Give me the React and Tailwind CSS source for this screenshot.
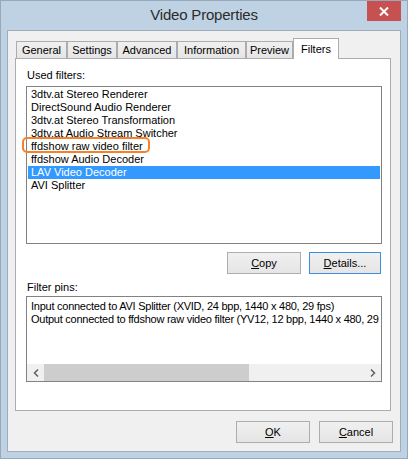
import React from "react";

const font = { fontFamily: '"Liberation Sans", Arial, sans-serif' };

const filters = [
  "3dtv.at Stereo Renderer",
  "DirectSound Audio Renderer",
  "3dtv.at Stereo Transformation",
  "3dtv.at Audio Stream Switcher",
  "ffdshow raw video filter",
  "ffdshow Audio Decoder",
  "LAV Video Decoder",
  "AVI Splitter",
];

const tabs = ["General", "Settings", "Advanced", "Information", "Preview"];
const tabWidths = ["w-[51px]", "w-[50px]", "w-[60px]", "w-[69px]", "w-[47px]"];

const Button = ({ children, className = "" }) => (
  <button
    className={`h-[22px] border bg-gradient-to-b from-[#f0f0f0] to-[#e5e5e5] text-[11px] text-black ${className}`}
  >
    {children}
  </button>
);

const App = () => {
  return (
    <div
      className="w-[408px] h-[459px] flex flex-col bg-[#bfd2e4] border border-[#97aabd] px-[6px] pb-[6px] text-black"
      style={font}
    >
      {/* title bar */}
      <div className="relative h-[29px] flex items-center justify-center">
        <span className="text-[15px] text-[#2b2b2b] tracking-[-0.2px]">Video Properties</span>
        <div className="absolute right-[0px] top-0 w-[34px] h-[20px] bg-[#c75050] flex items-center justify-center">
          <svg width="10" height="9" viewBox="0 0 10 9">
            <path d="M1 0.5 L9 8.5 M9 0.5 L1 8.5" stroke="white" strokeWidth="2" />
          </svg>
        </div>
      </div>

      {/* client */}
      <div className="flex-1 flex flex-col bg-[#f0f0f0] border border-[#a3adb8] pl-[7px] pr-[9px] pt-[7px]">
        {/* tab strip */}
        <div className="flex items-end h-[20px] pl-[1px]">
          {tabs.map((t, i) => (
            <div
              key={t}
              className={`${tabWidths[i]} h-[17px] border border-b-0 border-[#acacac] bg-gradient-to-b from-[#f0f0f0] to-[#e5e5e5] flex items-center justify-center text-[11px]`}
            >
              {t}
            </div>
          ))}
          <div className="w-[46px] h-[21px] -mb-[1px] border border-b-0 border-[#acacac] bg-white relative z-10 flex items-start justify-center pt-[2px] text-[11px]">
            Filters
          </div>
        </div>

        {/* panel */}
        <div className="h-[353px] border border-[#acacac] bg-white pl-[10px] pr-[8px] flex flex-col">
          <div className="h-[27px] flex items-end pb-[3px] pl-[1px] text-[11px]">Used filters:</div>
          <div className="relative h-[158px] border border-[#828282] px-[1px] pt-[1px]">
            {filters.map((f, i) => (
              <div
                key={f}
                className={`h-[13px] leading-[13px] pl-[3px] text-[11px] whitespace-nowrap ${
                  i === 6 ? "bg-[#3399ff] text-white" : ""
                }`}
              >
                {f}
              </div>
            ))}
            <div className="absolute left-[-5px] top-[50px] w-[128px] h-[16px] border-2 border-[#f5822a] rounded-[5px]" />
          </div>

          <div className="flex justify-end gap-[8px] pt-[8px] pr-[1px]">
            <Button className="w-[74px] border-[#adadad]">
              <span className="underline">C</span>opy
            </Button>
            <Button className="w-[72px] border-[#3c8ee0]">
              <span className="underline">D</span>etails...
            </Button>
          </div>

          <div className="h-[22px] flex items-end pb-[1px] pl-[1px] text-[11px]">Filter pins:</div>
          <div className="h-[86px] border border-[#828282] flex flex-col overflow-hidden">
            <div className="flex-1 pt-[3px] pl-[4px] text-[11px] leading-[13px] tracking-[-0.25px] whitespace-nowrap overflow-hidden">
              <div>Input connected to AVI Splitter (XVID, 24 bpp, 1440 x 480, 29 fps)</div>
              <div>Output connected to ffdshow raw video filter (YV12, 12 bpp, 1440 x 480, 29 fps)</div>
            </div>
            <div className="h-[17px] flex items-center bg-[#f0f0f0]">
              <div className="w-[17px] flex justify-center">
                <svg width="6" height="8" viewBox="0 0 6 8">
                  <path d="M5 0.5 L1.5 4 L5 7.5" stroke="#606060" strokeWidth="1.5" fill="none" />
                </svg>
              </div>
              <div className="w-[205px] h-full bg-[#cdcdcd]" />
              <div className="flex-1" />
              <div className="w-[17px] flex justify-center">
                <svg width="6" height="8" viewBox="0 0 6 8">
                  <path d="M1 0.5 L4.5 4 L1 7.5" stroke="#606060" strokeWidth="1.5" fill="none" />
                </svg>
              </div>
            </div>
          </div>
        </div>

        {/* footer */}
        <div className="flex justify-end gap-[9px] pt-[10px] -mr-[2px]">
          <Button className="w-[74px] border-[#adadad]">
            <span className="underline">O</span>K
          </Button>
          <Button className="w-[74px] border-[#adadad]">
            <span className="underline">C</span>ancel
          </Button>
        </div>
      </div>
    </div>
  );
};

export default App;
